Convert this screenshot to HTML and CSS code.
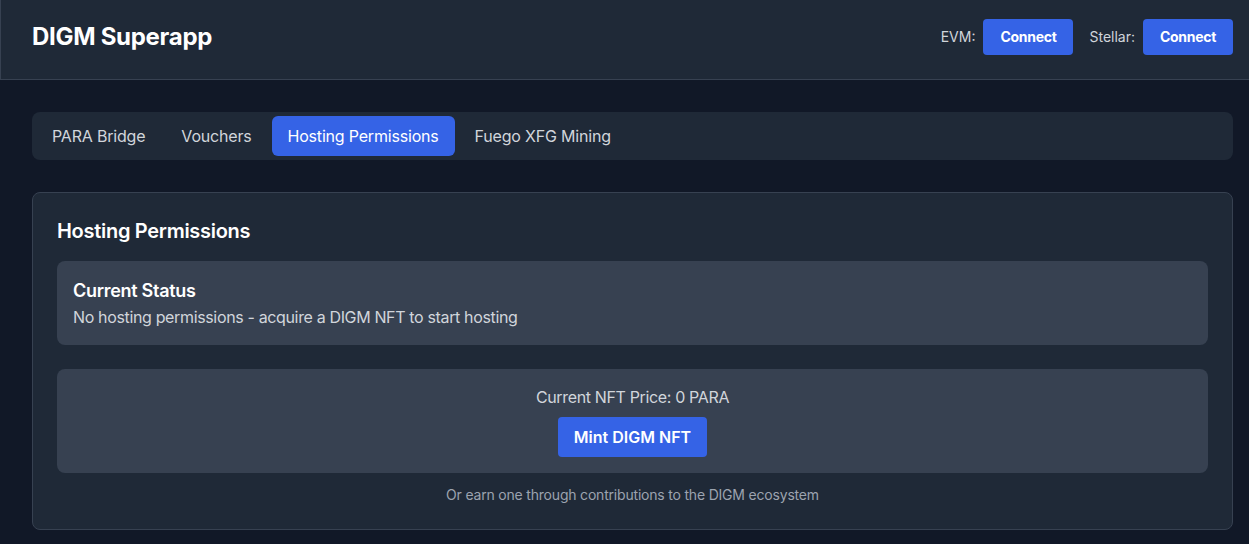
FILE: index.html
```html
<!DOCTYPE html>
<html lang="en">
<head>
<meta charset="utf-8">
<title>DIGM Superapp</title>
<link rel="stylesheet" href="styles.css">
</head>
<body>
  <header class="header">
    <h1 class="brand">DIGM Superapp</h1>
    <div class="wallets">
      <span class="wallet-label">EVM:</span>
      <button class="btn btn-sm">Connect</button>
      <span class="wallet-label wallet-label-gap">Stellar:</span>
      <button class="btn btn-sm">Connect</button>
    </div>
  </header>
  <main class="main">
    <nav class="tabs">
      <button class="tab">PARA Bridge</button>
      <button class="tab">Vouchers</button>
      <button class="tab tab-active">Hosting Permissions</button>
      <button class="tab">Fuego XFG Mining</button>
    </nav>
    <section class="card">
      <h2 class="card-title">Hosting Permissions</h2>
      <div class="panel">
        <h3 class="panel-title">Current Status</h3>
        <p class="panel-text">No hosting permissions - acquire a DIGM NFT to start hosting</p>
      </div>
      <div class="panel panel-center">
        <p class="panel-text">Current NFT Price: 0 PARA</p>
        <button class="btn btn-md">Mint DIGM NFT</button>
      </div>
      <p class="note">Or earn one through contributions to the DIGM ecosystem</p>
    </section>
  </main>
</body>
</html>
```
FILE: styles.css
```css
* { box-sizing: border-box; }
html, body { margin: 0; padding: 0; }
body {
  background: #111827;
  color: #fff;
  font-family: Inter, "Noto Sans", sans-serif;
  letter-spacing: -0.018em;
  -webkit-font-smoothing: antialiased;
}
.header {
  height: 80px;
  background: #1f2937;
  border-bottom: 1px solid #374151;
  border-left: 1px solid #374151;
  display: flex;
  align-items: center;
  justify-content: space-between;
  padding: 0 16px 6px 31px;
}
.brand {
  margin: 0;
  font-size: 24px;
  line-height: 32px;
  font-weight: 700;
}
.wallets {
  display: flex;
  align-items: center;
  gap: 8px;
}
.wallet-label {
  font-size: 14px;
  line-height: 20px;
  color: #d1d5db;
  letter-spacing: 0;
}
.wallet-label-gap { margin-left: 8px; }
.btn {
  background: #3563e6;
  color: #fff;
  border: 0;
  border-radius: 4px;
  font-family: inherit;
  letter-spacing: inherit;
  white-space: nowrap;
  cursor: pointer;
}
.btn-sm {
  font-size: 14px;
  line-height: 20px;
  font-weight: 700;
  padding: 8px 16px;
  min-width: 90px;
}
.btn-md {
  font-size: 16px;
  line-height: 24px;
  font-weight: 600;
  padding: 8px 16px;
  letter-spacing: 0;
}
.main {
  padding: 32px 16px 32px 32px;
}
.tabs {
  display: flex;
  gap: 4px;
  background: #1f2937;
  border-radius: 8px;
  padding: 4px;
  height: 48px;
  margin-bottom: 32px;
}
.tab {
  background: transparent;
  border: 0;
  color: #d1d5db;
  font-family: inherit;
  letter-spacing: -0.012em;
  font-size: 16px;
  line-height: 24px;
  padding: 8px 16px;
  border-radius: 6px;
  white-space: nowrap;
}
.tab-active {
  background: #3563e6;
  color: #fff;
}
.card {
  background: #1f2937;
  border: 1px solid #374151;
  border-radius: 8px;
  padding: 24px;
}
.card-title {
  margin: 0 0 16px;
  font-size: 20px;
  line-height: 28px;
  font-weight: 600;
}
.panel {
  background: #374151;
  border-radius: 8px;
  padding: 16px;
  margin-bottom: 24px;
}
.panel-center {
  display: flex;
  flex-direction: column;
  align-items: center;
  gap: 8px;
  margin-bottom: 0;
}
.panel-title {
  margin: 0;
  font-size: 18px;
  line-height: 28px;
  font-weight: 600;
}
.panel-text {
  margin: 0;
  font-size: 16px;
  line-height: 24px;
  color: #d1d5db;
  letter-spacing: -0.022em;
}
.note {
  margin: 12px 0 0;
  text-align: center;
  font-size: 14px;
  line-height: 20px;
  color: #9ca3af;
  letter-spacing: -0.014em;
}
```
